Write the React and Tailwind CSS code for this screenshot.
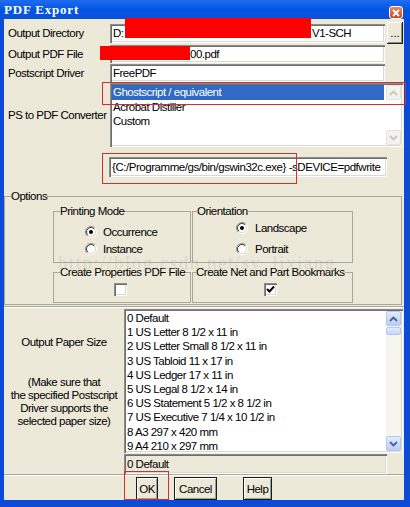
import React from "react";

const FONT = "font-['Liberation_Sans',Arial,sans-serif]";
const SUNKEN =
  "shadow-[inset_1px_1px_0_#8c8c8c,inset_2px_2px_0_#6e6e6e,inset_-1px_-1px_0_#ffffff,inset_-2px_-2px_0_#dcd9cc]";
const RAISED =
  "shadow-[inset_-1px_-1px_0_#202020,inset_1px_1px_0_#ffffff,inset_-2px_-2px_0_#8c8c8c]";
const LINE = "border-[#a9a79a]";

function Radio({ checked }) {
  return (
    <svg width="12" height="12" viewBox="0 0 12 12">
      <defs>
        <linearGradient id="ro" x1="0" y1="0" x2="1" y2="1">
          <stop offset="0.45" stopColor="#8a8a8a" />
          <stop offset="0.55" stopColor="#ffffff" />
        </linearGradient>
        <linearGradient id="ri" x1="0" y1="0" x2="1" y2="1">
          <stop offset="0.45" stopColor="#3c3c3c" />
          <stop offset="0.55" stopColor="#dcd9cc" />
        </linearGradient>
      </defs>
      <circle cx="6" cy="6" r="5.5" fill="none" stroke="url(#ro)" />
      <circle cx="6" cy="6" r="4.5" fill="#fff" stroke="url(#ri)" />
      {checked && <circle cx="6" cy="6" r="2" fill="#000" />}
    </svg>
  );
}

function Check({ checked }) {
  return (
    <div className={`flex h-[13px] w-[13px] items-center justify-center bg-white ${SUNKEN}`}>
      {checked && (
        <svg width="9" height="9" viewBox="0 0 9 9">
          <polyline points="1,4 3.5,6.5 8,1.5" fill="none" stroke="#000" strokeWidth="2" />
        </svg>
      )}
    </div>
  );
}

function Arrow({ up, active }) {
  const cls = active
    ? "border-[#b3c7f5] bg-gradient-to-b from-[#e3ecff] to-[#b9cdfa]"
    : "border-[#e4e2da] bg-[#f3f2ec]";
  return (
    <div className={`flex h-[15px] w-[15px] items-center justify-center rounded-[2px] border ${cls}`}>
      <svg width="9" height="6" viewBox="0 0 9 6">
        <polyline
          points={up ? "1,5 4.5,1.5 8,5" : "1,1 4.5,4.5 8,1"}
          fill="none"
          stroke={active ? "#4d6185" : "#c9c7bd"}
          strokeWidth="1.8"
        />
      </svg>
    </div>
  );
}

function Group({ legend, lm, h, children }) {
  return (
    <fieldset className={`border ${LINE} ${h}`}>
      <legend className={`whitespace-nowrap leading-[14px] ${lm}`}>{legend}</legend>
      {children}
    </fieldset>
  );
}

const papers = [
  "0 Default",
  "1 US Letter 8 1/2 x 11 in",
  "2 US Letter Small 8 1/2 x 11 in",
  "3 US Tabloid 11 x 17 in",
  "4 US Ledger 17 x 11 in",
  "5 US Legal 8 1/2 x 14 in",
  "6 US Statement 5 1/2 x 8 1/2 in",
  "7 US Executive 7 1/4 x 10 1/2 in",
  "8 A3 297 x 420 mm",
  "9 A4 210 x 297 mm",
];

export default function App() {
  return (
    <div className={`relative h-[507px] w-[410px] overflow-hidden whitespace-nowrap bg-[#0c4ad8] text-[11.5px] leading-[14px] tracking-[-0.5px] text-black ${FONT}`}>
      {/* title bar */}
      <div className="flex h-[19px] items-start justify-between bg-gradient-to-b from-[#1f6cf0] via-[#0455e3] to-[#0a50dc] pl-[4px] pr-[7px]">
        <span className="pt-[3px] font-['Liberation_Serif',serif] text-[13px] font-bold leading-[14px] tracking-[0.8px] text-white">
          PDF Export
        </span>
        <div className="mt-[6px] flex h-[13px] w-[14px] items-center justify-center rounded-[3px] border border-white bg-gradient-to-b from-[#e8866a] to-[#c94524]">
          <svg width="8" height="8" viewBox="0 0 8 8">
            <path d="M1 1L7 7M7 1L1 7" stroke="#fff" strokeWidth="1.8" />
          </svg>
        </div>
      </div>

      <div className="pl-[4px] pr-[6px]">
        <div className="flex h-[481px] w-[400px] flex-col bg-[#ece9d8]">
          {/* Output directory */}
          <div className="mt-[3px] flex h-[22px] items-center">
            <div className="w-[106px] pl-[4px]">Output Directory</div>
            <div className={`flex h-[19px] w-[275px] items-center bg-white pl-[3px] ${SUNKEN}`}>
              <span className="w-[199px]">D:</span>
              <span>V1-SCH</span>
            </div>
            <button className={`ml-[2px] flex h-[22px] w-[16px] items-end justify-center bg-[#ece9d8] pb-[4px] tracking-normal ${RAISED}`}>
              ...
            </button>
          </div>

          <div className="mt-[1px] flex h-[18px] items-center">
            <div className="w-[106px] pl-[4px]">Output PDF File</div>
            <div className={`flex h-[18px] w-[275px] items-center bg-white pl-[3px] ${SUNKEN}`}>
              <span className="w-[77px]" />
              <span>00.pdf</span>
            </div>
          </div>

          <div className="mt-[1px] flex h-[18px] items-center">
            <div className="w-[106px] pl-[4px]">Postscript Driver</div>
            <div className={`flex h-[18px] w-[275px] items-center bg-white pl-[3px] ${SUNKEN}`}>FreePDF</div>
          </div>

          <div className="mt-[1px] flex h-[64px] items-center">
            <div className="w-[106px] pl-[4px]">PS to PDF Converter</div>
            <div className={`flex h-[64px] w-[293px] bg-white p-[2px] ${SUNKEN}`}>
              <div className="flex w-[272px] flex-col">
                <div className="h-[15px] bg-[#316ac5] pl-[1px] leading-[15px] text-white">Ghostscript / equivalent</div>
                <div className="h-[14px] pl-[1px]">Acrobat Distiller</div>
                <div className="h-[14px] pl-[1px]">Custom</div>
              </div>
              <div className="ml-auto flex w-[15px] flex-col justify-between">
                <Arrow up />
                <Arrow />
              </div>
            </div>
          </div>

          <div className={`ml-[105px] mt-[10px] flex h-[20px] w-[278px] items-center overflow-hidden bg-white pl-[3px] tracking-[-0.45px] ${SUNKEN}`}>
            {"{C:/Programme/gs/bin/gswin32c.exe} -sDEVICE=pdfwrite"}
          </div>

          {/* Options */}
          <fieldset className={`mr-[2px] mt-[12px] border ${LINE}`}>
            <legend className="ml-[6px] leading-[14px]">Options</legend>
            <div className="ml-[48px] mt-[1px] grid grid-cols-[138px_161px] gap-x-[1px] gap-y-[2px] pb-[1px]">
              <Group legend="Printing Mode" lm="ml-[6px]" h="h-[59px]">
                <div className="flex flex-col gap-[1px] pl-[31px] pt-[6px]">
                  <div className="flex h-[16px] items-center gap-[6px]">
                    <Radio checked />
                    <span>Occurrence</span>
                  </div>
                  <div className="flex h-[16px] items-center gap-[6px]">
                    <Radio />
                    <span>Instance</span>
                  </div>
                </div>
              </Group>
              <Group legend="Orientation" lm="ml-[4px]" h="h-[59px]">
                <div className="flex flex-col gap-[5px] pl-[43px] pt-[2px]">
                  <div className="flex h-[16px] items-center gap-[7px]">
                    <Radio checked />
                    <span>Landscape</span>
                  </div>
                  <div className="flex h-[16px] items-center gap-[7px]">
                    <Radio />
                    <span>Portrait</span>
                  </div>
                </div>
              </Group>
              <Group legend="Create Properties PDF File" lm="ml-[6px]" h="h-[38px]">
                <div className="pl-[60px] pt-[4px]">
                  <Check />
                </div>
              </Group>
              <Group legend="Create Net and Part Bookmarks" lm="ml-[3px]" h="h-[38px]">
                <div className="pl-[71px] pt-[4px]">
                  <Check checked />
                </div>
              </Group>
            </div>
          </fieldset>

          {/* paper size */}
          <div className={`mt-[1px] flex h-[168px] border-t ${LINE} shadow-[inset_0_1px_0_#ffffff]`}>
            <div className="w-[120px] text-center">
              <div className="pt-[28px]">Output Paper Size</div>
              <div className="mt-[27px] leading-[13px]">
                (Make sure that
                <br />
                the specified Postscript
                <br />
                Driver supports the
                <br />
                selected paper size)
              </div>
            </div>
            <div className="flex flex-col pt-[2px]">
              <div className={`flex h-[144px] w-[279px] bg-white p-[2px] ${SUNKEN}`}>
                <div className="flex-1 overflow-hidden pl-[1px] leading-[14.2px]">
                  {papers.map((p) => (
                    <div key={p}>{p}</div>
                  ))}
                </div>
                <div className="flex w-[15px] flex-col bg-[#f6f5f0]">
                  <Arrow up active />
                  <div className="mt-[1px] h-[8px] w-[15px] rounded-[2px] border border-[#b3c7f5] bg-gradient-to-b from-[#e3ecff] to-[#c4d5fb]" />
                  <div className="flex-1" />
                  <Arrow active />
                </div>
              </div>
              <div className={`mt-[1px] flex h-[20px] w-[263px] items-center bg-[#ece9d8] pl-[3px] ${SUNKEN}`}>0 Default</div>
            </div>
          </div>

          {/* buttons */}
          <div className={`flex flex-1 border-t ${LINE} pl-[132px] pt-[2px] shadow-[inset_0_1px_0_#ffffff]`}>
            <button className="h-[23px] w-[22px] border border-[#1c1c1c] bg-[#ece9d8] shadow-[inset_1px_1px_0_#ffffff,inset_-1px_-1px_0_#9c9c9c]">
              OK
            </button>
            <button className="ml-[16px] h-[23px] w-[43px] border border-[#1c1c1c] bg-[#ece9d8] shadow-[inset_1px_1px_0_#ffffff,inset_-1px_-1px_0_#9c9c9c]">
              Cancel
            </button>
            <button className="ml-[26px] h-[23px] w-[29px] border border-[#1c1c1c] bg-[#ece9d8] shadow-[inset_1px_1px_0_#ffffff,inset_-1px_-1px_0_#9c9c9c]">
              Help
            </button>
          </div>
        </div>
      </div>

      {/* watermark */}
      <div className="pointer-events-none absolute left-[58px] top-[252px] font-['Liberation_Serif',serif] text-[19px] leading-[22px] tracking-[1.5px] text-[#b0ad9f]/30">
        http://blog.csdn.net/sy_lixiang
      </div>

      {/* redactions */}
      <div className="absolute left-[125px] top-[18px] h-[20px] w-[186px] bg-[#ff0000]" />
      <div className="absolute left-[100px] top-[46px] h-[14px] w-[90px] bg-[#ff0000]" />

      {/* annotation boxes */}
      <div className="pointer-events-none absolute left-[102px] top-[82px] h-[23px] w-[304px] border border-[#d03030]" />
      <div className="pointer-events-none absolute left-[102px] top-[153px] h-[31px] w-[195px] border border-[#d03030]" />
      <div className="pointer-events-none absolute left-[124px] top-[471px] h-[29px] w-[45px] border border-[#d03030]" />
    </div>
  );
}
